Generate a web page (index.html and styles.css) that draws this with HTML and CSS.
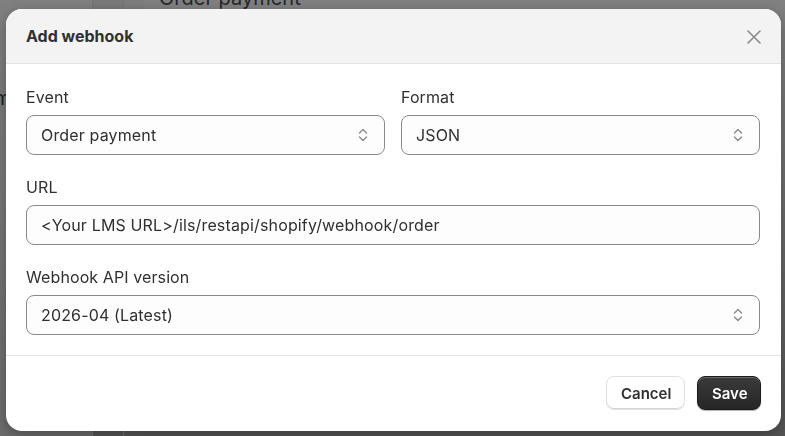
FILE: index.html
```html
<!DOCTYPE html>
<html lang="en">
<head>
  <meta charset="UTF-8">
  <meta name="viewport" content="width=device-width, initial-scale=1.0">
  <title>Add webhook</title>
  <link rel="stylesheet" href="styles.css">
</head>
<body>
  <div class="backdrop">
    <div class="col col-a"><span class="peek-left">Item</span></div>
    <div class="col col-b"></div>
    <div class="col col-c"></div>
    <div class="col col-d"><span class="peek-top">Order payment</span></div>
  </div>

  <div class="modal">
    <div class="modal-header">
      <h2>Add webhook</h2>
      <button class="close" aria-label="Close">
        <svg width="14" height="14" viewBox="0 0 14 14"><path d="M1 1L13 13M13 1L1 13" stroke="#8a8a8a" stroke-width="1.6" stroke-linecap="round"/></svg>
      </button>
    </div>

    <div class="modal-body">
      <div class="row">
        <div class="field">
          <label>Event</label>
          <div class="select">
            <span>Order payment</span>
            <svg class="chev" width="20" height="20" viewBox="0 0 20 20"><path d="M6.5 8L10 4.5L13.5 8M6.5 12L10 15.5L13.5 12" fill="none" stroke="#8a8a8a" stroke-width="1.4" stroke-linecap="round" stroke-linejoin="round"/></svg>
          </div>
        </div>
        <div class="field">
          <label>Format</label>
          <div class="select">
            <span>JSON</span>
            <svg class="chev" width="20" height="20" viewBox="0 0 20 20"><path d="M6.5 8L10 4.5L13.5 8M6.5 12L10 15.5L13.5 12" fill="none" stroke="#8a8a8a" stroke-width="1.4" stroke-linecap="round" stroke-linejoin="round"/></svg>
          </div>
        </div>
      </div>

      <div class="field">
        <label>URL</label>
        <div class="input">&lt;Your LMS URL&gt;/ils/restapi/shopify/webhook/order</div>
      </div>

      <div class="field">
        <label>Webhook API version</label>
        <div class="select">
          <span>2026-04 (Latest)</span>
          <svg class="chev" width="20" height="20" viewBox="0 0 20 20"><path d="M6.5 8L10 4.5L13.5 8M6.5 12L10 15.5L13.5 12" fill="none" stroke="#8a8a8a" stroke-width="1.4" stroke-linecap="round" stroke-linejoin="round"/></svg>
        </div>
      </div>
    </div>

    <div class="modal-footer">
      <button class="btn btn-secondary">Cancel</button>
      <button class="btn btn-primary">Save</button>
    </div>
  </div>
</body>
</html>
```

FILE: styles.css
```css
* { box-sizing: border-box; }
body { margin: 0; font-family: Inter, "Noto Sans", sans-serif; color: #303030; overflow: hidden; }

.backdrop { display: flex; height: 100vh; }
.col { height: 100%; overflow: hidden; }
.col-a { width: 93px; background: linear-gradient(#808080, #6c6c6c); border-right: 1px solid #747474; }
.col-b { width: 30px; background: linear-gradient(#7a7a7a, #575757); }
.col-c { width: 21px; background: linear-gradient(#7d7d7d, #575757); border-left: 1px solid #747474; }
.col-d { flex: 1; background: linear-gradient(#818181, #555555); padding-left: 15px; }
.peek-top { display: block; margin-top: -14px; font-size: 20px; color: #262626; }
.peek-left { display: block; margin: 86px 0 0 -30px; font-size: 20px; color: #222; }

.modal { position: fixed; left: 6px; top: 9px; width: 775px; background: #fff; border-radius: 16px; overflow: hidden; box-shadow: 0 4px 14px rgba(0, 0, 0, 0.3); }

.modal-header { height: 55px; display: flex; align-items: center; justify-content: space-between; padding: 0 20px; background: #f3f3f3; border-bottom: 1px solid #e3e3e3; }
.modal-header h2 { margin: 0; font-size: 16px; font-weight: 650; color: #303030; }
.close { border: none; background: none; padding: 0; width: 14px; height: 14px; display: flex; cursor: pointer; margin-top: 1px; }

.modal-body { padding: 23px 21px 20px 20px; display: flex; flex-direction: column; gap: 22px; border-bottom: 1px solid #e3e3e3; }
.row { display: flex; gap: 16px; }
.row .field { flex: 1; }
.field label { display: block; font-size: 16px; line-height: 20px; color: #303030; margin-bottom: 8px; letter-spacing: 0.1px; }

.select, .input { height: 40px; border: 1px solid #8a8a8a; border-radius: 8px; background: #fdfdfd; font-size: 16px; letter-spacing: 0.15px; color: #303030; display: flex; align-items: center; padding: 0 11px 0 14px; }
.select { justify-content: space-between; }
.chev { flex-shrink: 0; }

.modal-footer { display: flex; justify-content: flex-end; gap: 12px; padding: 20px 20px 21px; }
.btn { height: 34px; border-radius: 8px; font-family: inherit; font-size: 15px; font-weight: 600; padding: 0 14px; cursor: pointer; }
.btn-secondary { width: 79px; background: #fff; color: #303030; border: 1px solid #e0e0e0; box-shadow: inset 0 -1px 0 #d4d4d4; }
.btn-primary { width: 64px; background: linear-gradient(#3a3a3a, #262626); color: #fff; border: 1px solid #1a1a1a; box-shadow: inset 0 1px 0 rgba(255, 255, 255, 0.25), 0 1px 1px rgba(0, 0, 0, 0.3); }
```
